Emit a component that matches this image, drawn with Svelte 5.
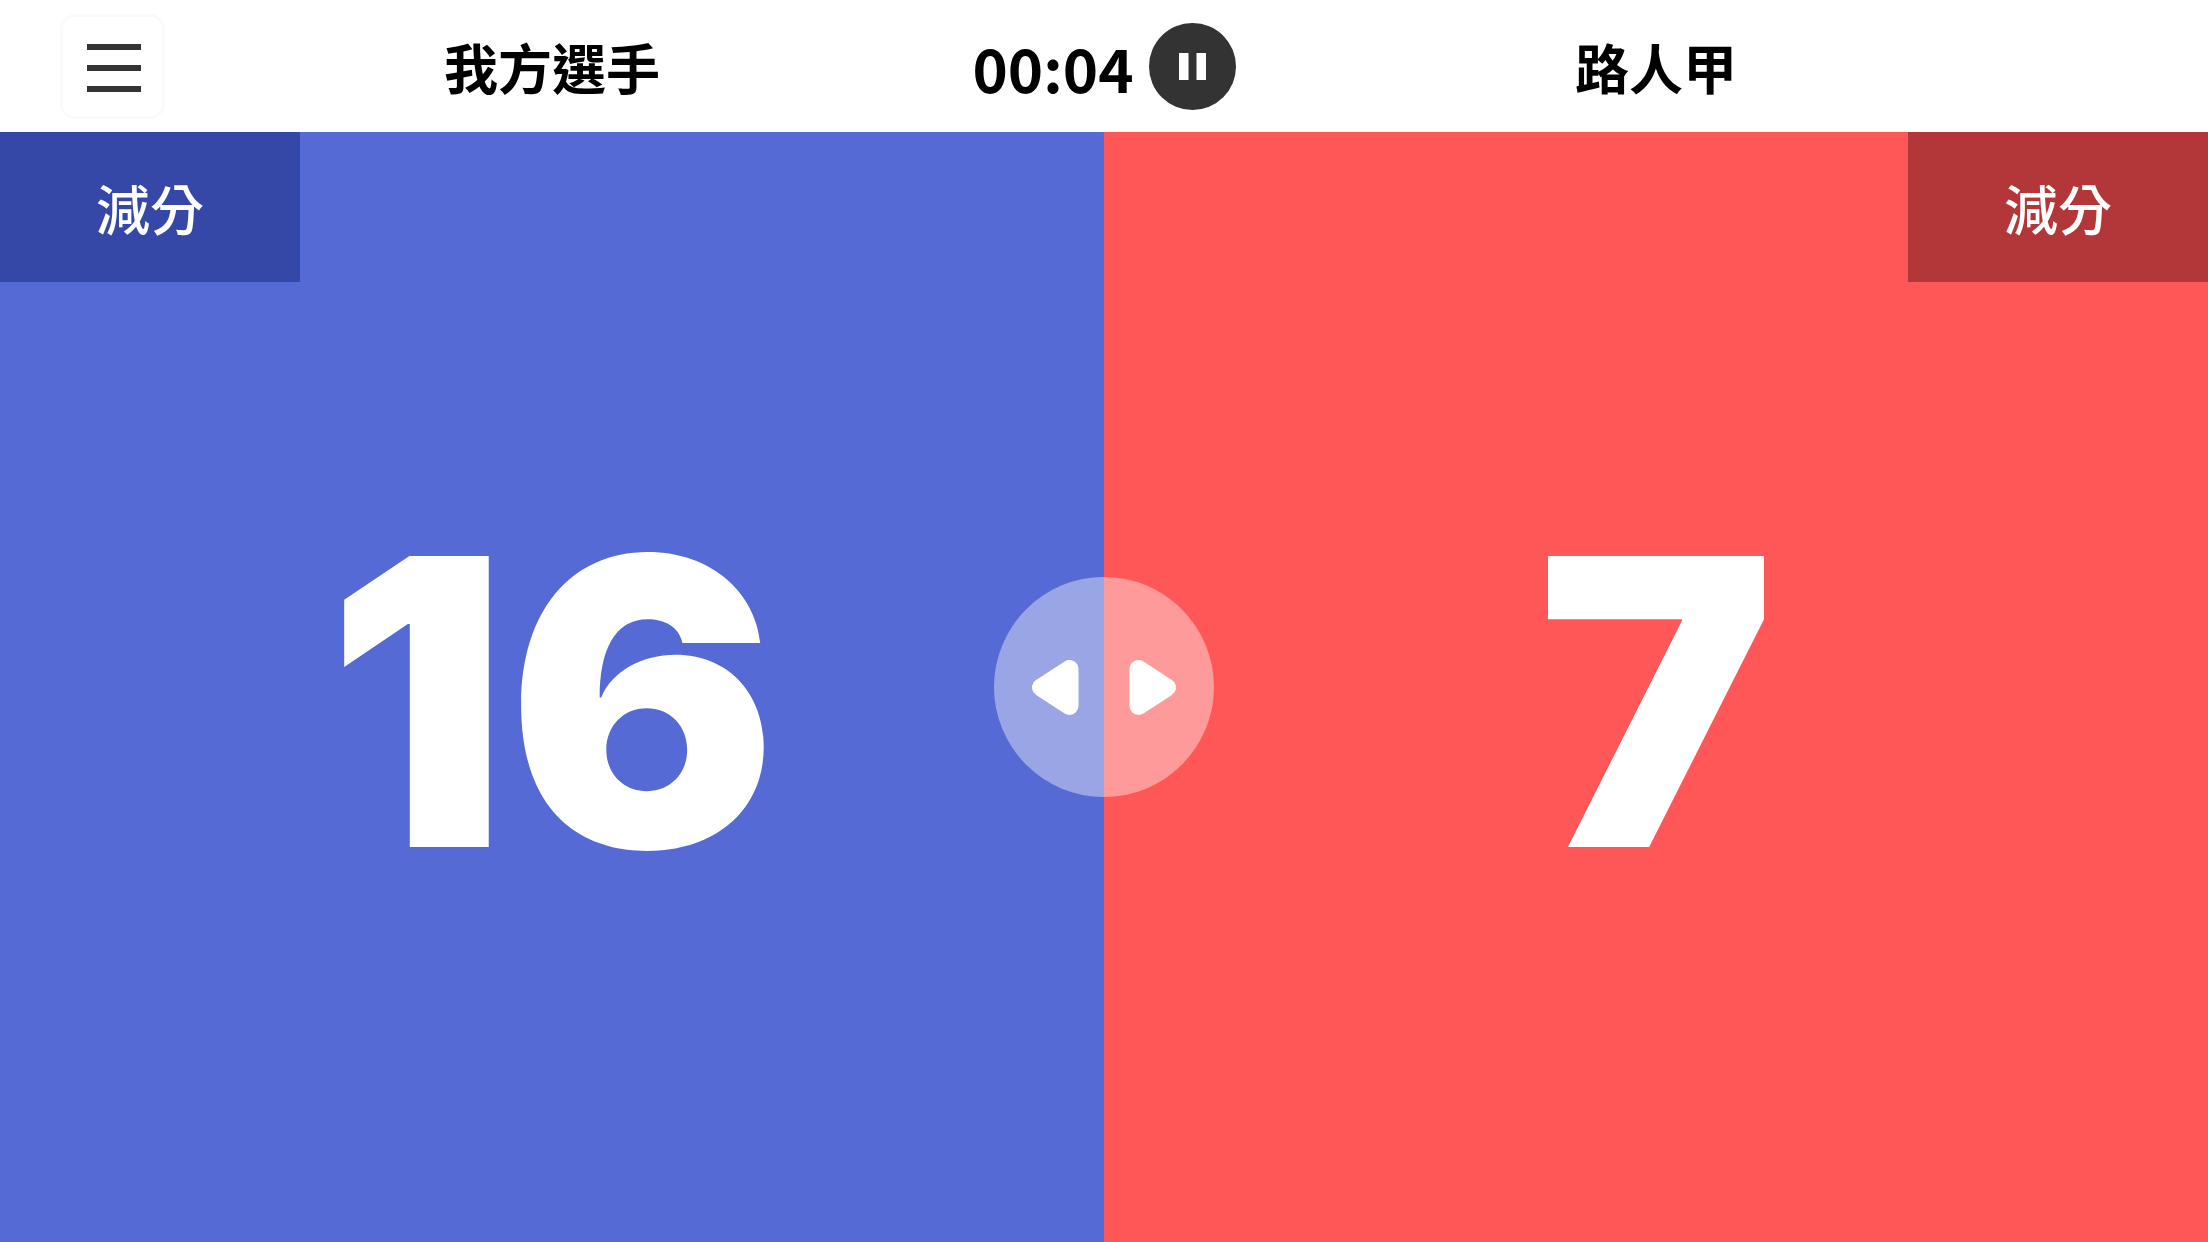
<script>
    let home = { name: "我方選手", score: 16 };
    let away = { name: "路人甲", score: 7 };
    let seconds = 4;

    const pad = (n) => String(n).padStart(2, "0");

    $: time = `${pad(Math.floor(seconds / 60))}:${pad(seconds % 60)}`;

    function swapSides() {
        [home, away] = [away, home];
    }
</script>

<main class="page">
    <header class="topbar">
        <button class="menu" aria-label="選單">
            <svg viewBox="0 0 99 99" fill="#333">
                <rect x="24" y="27" width="54" height="6" />
                <rect x="24" y="48" width="54" height="6" />
                <rect x="24" y="69" width="54" height="6" />
            </svg>
        </button>
        <h2 class="name home">{home.name}</h2>
        <div class="timer">
            <span class="time">{time}</span>
            <button class="pause" aria-label="暫停">
                <svg viewBox="0 0 87 87" fill="#fff">
                    <rect x="30" y="30" width="9.5" height="27" />
                    <rect x="47.5" y="30" width="9.5" height="27" />
                </svg>
            </button>
        </div>
        <h2 class="name away">{away.name}</h2>
    </header>

    <section class="board">
        <div class="side blue">
            <button class="score" on:click={() => (home.score += 1)}>{home.score}</button>
            <button class="minus" on:click={() => (home.score -= 1)}>減分</button>
        </div>
        <div class="side red">
            <button class="score" on:click={() => (away.score += 1)}>{away.score}</button>
            <button class="minus" on:click={() => (away.score -= 1)}>減分</button>
        </div>
        <button class="swap" aria-label="換邊" on:click={swapSides}>
            <svg viewBox="0 0 220 220" fill="#fff" stroke="#fff" stroke-width="18" stroke-linejoin="round">
                <path d="M47 110.5L75.5 92V129Z" />
                <path d="M173 110.5L144.5 92V129Z" />
            </svg>
        </button>
    </section>
</main>

<style>
    :global(body) {
        margin: 0;
    }
    .page {
        display: flex;
        flex-direction: column;
        min-height: 100vh;
        background-color: #fff;
        font-family: "Noto Sans CJK TC", sans-serif;
    }
    button {
        padding: 0;
        border: none;
        font-family: inherit;
        color: #fff;
        cursor: pointer;
    }
    svg {
        display: block;
        width: 100%;
        height: 100%;
    }

    /**
        Top bar, names sit over the middle of each half
    **/
    .topbar {
        display: grid;
        grid-template-columns: repeat(4, minmax(0, 1fr));
        grid-template-rows: 132px;
        align-items: center;
    }
    .topbar > * {
        grid-row: 1;
    }
    .menu {
        grid-column: 1;
        z-index: 1;
        box-sizing: border-box;
        width: 105px;
        height: 105px;
        margin-left: 60px;
        background-color: #fff;
        border: 3px solid #fafafa;
        border-radius: 15px;
    }
    .name,
    .time {
        padding-top: 2px;
        font-weight: 700;
        color: #000;
    }
    .name {
        margin: 0;
        font-size: 54px;
        line-height: 80px;
        text-align: center;
    }
    .home {
        grid-column: 1 / 3;
    }
    .away {
        grid-column: 3 / 5;
    }
    .timer {
        grid-column: 2 / 4;
        justify-self: center;
        display: flex;
        align-items: center;
        gap: 15px;
    }
    .time {
        font-size: 60px;
        line-height: 88px;
    }
    .pause {
        width: 87px;
        height: 87px;
        background-color: #333;
        border-radius: 50%;
    }

    /**
        Score board
    **/
    .board {
        flex: 1;
        display: grid;
        grid-template-columns: 1fr 1fr;
        position: relative;
    }
    .side {
        display: grid;
    }
    .side > * {
        grid-area: 1 / 1;
    }
    .blue {
        background-color: #556ad4;
    }
    .red {
        background-color: #ff5757;
    }
    .score {
        padding-top: 27px;
        background: none;
        font-family: Inter, sans-serif;
        font-size: 400px;
        font-weight: 900;
        line-height: 1;
    }
    .minus {
        align-self: start;
        width: 300px;
        height: 150px;
        font-size: 54px;
        font-weight: 500;
    }
    .blue .minus {
        background-color: #3548a7;
    }
    .red .minus {
        justify-self: end;
        background-color: #b33738;
    }
    .swap {
        position: absolute;
        top: 50%;
        left: 50%;
        width: 220px;
        height: 220px;
        transform: translate(-50%, -50%);
        background-color: rgba(255, 255, 255, 0.4);
        border-radius: 50%;
    }
</style>
